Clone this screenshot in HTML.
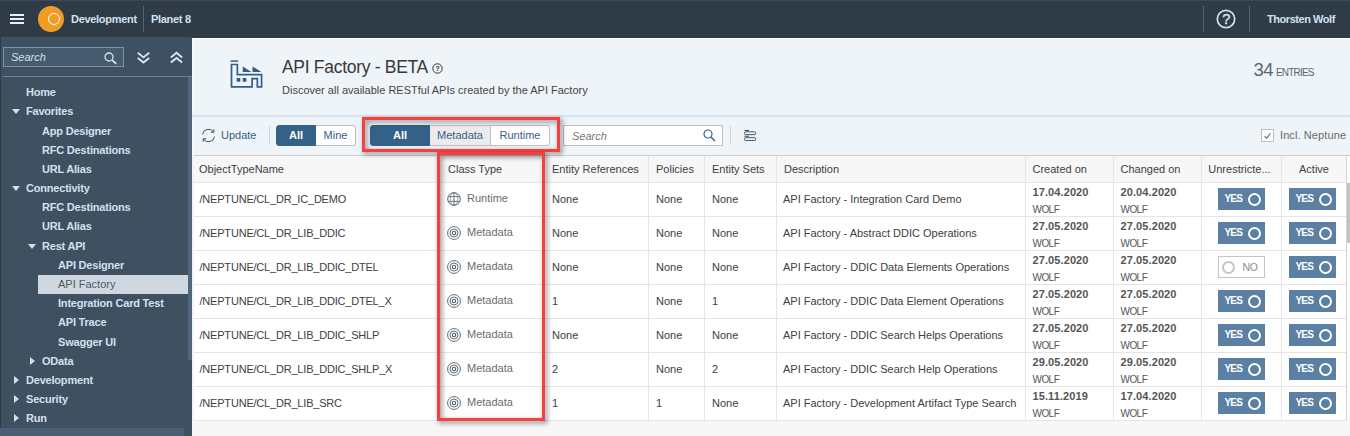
<!DOCTYPE html>
<html lang="en">
<head>
<meta charset="utf-8">
<title>API Factory - BETA</title>
<style>
*{box-sizing:border-box;margin:0;padding:0}
html,body{width:1350px;height:436px;overflow:hidden;background:#eff4f9;font-family:"Liberation Sans",sans-serif;font-size:11px;color:#333}
.abs{position:absolute}
#shell{position:absolute;left:0;top:0;width:1350px;height:37px;background:#2f3c48;color:#d1e0ee}
#shell .t{position:absolute;top:12px;font-weight:bold;font-size:11px;letter-spacing:-0.3px;line-height:14px;white-space:nowrap}
#shell .sep{position:absolute;top:6px;width:1px;height:26px;background:#56646f}
#side{position:absolute;left:0;top:37px;width:192px;height:399px;background:#3f5161;color:#d1e0ee}
#side .it{position:absolute;font-weight:bold;font-size:11px;letter-spacing:-0.2px;line-height:14px;white-space:nowrap}
#side .sel{position:absolute;left:38px;width:150px;height:19px;background:#cfd8e1}
#side .ar{position:absolute;width:0;height:0}
#side .dn{border-left:4.5px solid transparent;border-right:4.5px solid transparent;border-top:5px solid #d1e0ee}
#side .rt{border-top:4px solid transparent;border-bottom:4px solid transparent;border-left:5px solid #d1e0ee}
#main{position:absolute;left:192px;top:37px;width:1158px;height:399px;background:#eff4f9}
.txt{position:absolute;white-space:nowrap;line-height:14px}
.vl{position:absolute;width:1px;background:#e5e5e5}
.hl{position:absolute;height:1px;background:#e5e5e5}
.c{position:absolute;white-space:nowrap;line-height:14px;font-size:11px;color:#404040}
.g{color:#6a6d70}
.d{font-weight:bold;color:#555;letter-spacing:0.1px}
.u{font-size:10px;color:#555;letter-spacing:-0.55px}
.sw{position:absolute;width:47px;height:22px;background:#5b80a3;color:#fff;font-weight:bold;font-size:10px;letter-spacing:-0.8px;line-height:22px;padding-left:6.5px}
.sw i{position:absolute;right:4px;top:4.5px;width:13px;height:13px;border:2px solid #fff;border-radius:50%}
.swn{position:absolute;width:47px;height:22px;background:#fff;border:1px solid #c4c4c4;color:#8c8c8c;font-size:10.5px;letter-spacing:-0.3px;line-height:20px;padding-left:23.5px}
.swn i{position:absolute;left:3px;top:3.5px;width:13px;height:13px;border:2px solid #c4c4c4;border-radius:50%}
.seg{position:absolute;top:125px;height:21px;font-size:11px;line-height:18px;text-align:center;color:#346187;background:#fff;border:1px solid #c0c0c0}
.seg.on{background:#346187;color:#fff;font-weight:bold;border-color:#346187}
.red{position:absolute;border:3px solid #f83f40;filter:drop-shadow(2px 2px 2.5px rgba(0,0,0,.5))}
</style>
</head>
<body>
<div id="shell">
<div class="abs" style="left:0;top:0;width:1350px;height:1px;background:#3b4956"></div>
<svg class="abs" style="left:10px;top:14px" width="15" height="10" viewBox="0 0 15 10"><path d="M0 1h14M0 5h14M0 9h14" stroke="#e6f0f9" stroke-width="2"/></svg>
<div class="abs" style="left:38px;top:6px;width:26px;height:26px;border-radius:50%;background:#f09d28"></div>
<div class="abs" style="left:48px;top:13px;width:12px;height:12px;border-radius:50%;border:1px solid #fff"></div>
<div class="t" style="left:71px">Development</div>
<div class="sep" style="left:143px"></div>
<div class="t" style="left:151px">Planet 8</div>
<div class="sep" style="left:1203px"></div>
<svg class="abs" style="left:1216px;top:9px" width="20" height="20" viewBox="0 0 20 20"><circle cx="10" cy="10" r="8.7" fill="none" stroke="#d1e0ee" stroke-width="1.7"/><text x="10.2" y="15" text-anchor="middle" font-family="Liberation Sans, sans-serif" font-size="14.5" stroke="#d1e0ee" stroke-width="0.4" fill="#d1e0ee">?</text></svg>
<div class="sep" style="left:1249px"></div>
<div class="t" style="left:1267px;letter-spacing:-0.45px">Thorsten Wolf</div>
</div>
<div id="side">
<div class="abs" style="left:0;top:0;width:1px;height:399px;background:#2f3c48"></div>
<div class="abs" style="left:3px;top:10px;width:121px;height:20px;border:1px solid #7f93a6;background:#475b6e"></div>
<div class="txt" style="left:11px;top:13px;font-style:italic;font-size:11px;color:#d1e0ee">Search</div>
<svg class="abs" style="left:104px;top:14.7px" width="13" height="13" viewBox="0 0 13 13"><circle cx="5" cy="5" r="4" fill="none" stroke="#cfe3f5" stroke-width="1.3"/><path d="M8 8l4.3 3.8" stroke="#cfe3f5" stroke-width="1.7"/></svg>
<svg class="abs" style="left:137px;top:14px" width="13" height="13" viewBox="0 0 13 13"><path d="M0.8 1.8l5.7 4.6 5.7-4.6M0.8 7l5.7 4.6 5.7-4.6" fill="none" stroke="#d5e8f9" stroke-width="1.9"/></svg>
<svg class="abs" style="left:169.5px;top:14px" width="13" height="13" viewBox="0 0 13 13"><path d="M0.8 6.4l5.7-4.6 5.7 4.6M0.8 11.6l5.7-4.6 5.7 4.6" fill="none" stroke="#d5e8f9" stroke-width="1.9"/></svg>
<div class="abs" style="left:3px;top:39px;width:189px;height:1px;background:#6d8297"></div>
<div class="abs" style="left:188px;top:40px;width:4px;height:283px;background:#50677e"></div>
<div class="abs" style="left:0;top:391px;width:184px;height:8px;background:#4a5f73"></div>
<div class="it" style="left:26px;top:48px">Home</div>
<div class="ar dn" style="left:12px;top:72px"></div>
<div class="it" style="left:26px;top:67px">Favorites</div>
<div class="it" style="left:42px;top:87px">App Designer</div>
<div class="it" style="left:42px;top:106px">RFC Destinations</div>
<div class="it" style="left:42px;top:125px">URL Alias</div>
<div class="ar dn" style="left:12px;top:149px"></div>
<div class="it" style="left:26px;top:144px">Connectivity</div>
<div class="it" style="left:42px;top:163px">RFC Destinations</div>
<div class="it" style="left:42px;top:182px">URL Alias</div>
<div class="ar dn" style="left:28px;top:207px"></div>
<div class="it" style="left:42px;top:202px">Rest API</div>
<div class="it" style="left:58px;top:221px">API Designer</div>
<div class="sel" style="top:238px"></div>
<div class="it" style="left:58px;top:240px;color:#4d5a66;font-weight:normal;letter-spacing:0">API Factory</div>
<div class="it" style="left:58px;top:259px">Integration Card Test</div>
<div class="it" style="left:58px;top:278px">API Trace</div>
<div class="it" style="left:58px;top:298px">Swagger UI</div>
<div class="ar rt" style="left:30px;top:320px"></div>
<div class="it" style="left:42px;top:317px">OData</div>
<div class="ar rt" style="left:14px;top:339px"></div>
<div class="it" style="left:26px;top:336px">Development</div>
<div class="ar rt" style="left:14px;top:358px"></div>
<div class="it" style="left:26px;top:355px">Security</div>
<div class="ar rt" style="left:14px;top:377px"></div>
<div class="it" style="left:26px;top:374px">Run</div>
</div>
<div id="content" class="abs" style="left:0;top:0;width:1350px;height:436px">
<div class="abs" style="left:191px;top:37px;width:1159px;height:1px;background:#2f3c48"></div>
<div class="abs" style="left:192px;top:38px;width:1158px;height:1px;background:#fff"></div>
<div class="abs" style="left:192px;top:38px;width:1px;height:117px;background:#f5f8fb"></div>
<svg class="abs" style="left:222px;top:52px" width="50" height="44" viewBox="0 0 495 436"><g fill="none" stroke="#30608a" stroke-width="17"><path d="M85 90H160" stroke-width="15"/><path d="M94 124H152V225H392V346H350V263H298V346H94Z"/></g><path d="M205 143V197H292ZM302 143V197H390ZM145 258h36v37h-36zM205 258h36v37h-36z" fill="#30608a"/></svg>
<div class="txt" style="left:282px;top:56px;font-size:17.5px;line-height:22px;letter-spacing:-0.3px;color:#383838">API Factory - BETA</div>
<svg class="abs" style="left:432px;top:63px" width="11" height="11" viewBox="0 0 11 11"><circle cx="5.5" cy="5.5" r="4.7" fill="none" stroke="#333" stroke-width="1"/><text x="5.5" y="8.3" text-anchor="middle" font-family="Liberation Sans, sans-serif" font-weight="bold" font-size="7.5" fill="#333">?</text></svg>
<div class="txt" style="left:282px;top:83px;color:#444">Discover all available RESTful APIs created by the API Factory</div>
<div class="txt" style="left:1253.5px;top:59px;font-size:18.5px;line-height:22px;color:#5c666e;letter-spacing:-0.6px">34</div>
<div class="txt" style="left:1276px;top:66px;font-size:10px;color:#5c666e;letter-spacing:-0.8px">ENTRIES</div>
<div class="abs" style="left:192px;top:115px;width:1158px;height:2px;background:#d6e3f0"></div>
<svg class="abs" style="left:201px;top:128px" width="15" height="15" viewBox="0 0 15 15"><g fill="none" stroke="#3f5161" stroke-width="1"><path d="M1.5 6.5a6 6 0 0 1 11-2.5"/><path d="M13.5 8.5a6 6 0 0 1-11 2.5"/><path d="M12.8 1.2v3h-3M2.2 13.8v-3h3"/></g></svg>
<div class="txt" style="left:221px;top:128px;color:#346187;font-size:11px">Update</div>
<div class="abs" style="left:269px;top:126px;width:1px;height:19px;background:#ccd5dd"></div>
<div class="seg on" style="left:276px;width:40px;border-radius:3px 0 0 3px">All</div>
<div class="seg" style="left:316px;width:40px;border-radius:0 3px 3px 0;border-left:0">Mine</div>
<div class="seg on" style="left:370px;width:60px;border-radius:3px 0 0 3px">All</div>
<div class="seg" style="left:430px;width:61px;border-left:0;background:#ebebeb">Metadata</div>
<div class="seg" style="left:491px;width:59px;border-radius:0 3px 3px 0;border-left:0">Runtime</div>
<div class="abs" style="left:563px;top:125px;width:160px;height:21px;background:#fff;border:1px solid #c0c0c0"></div>
<div class="txt" style="left:572px;top:129px;font-style:italic;color:#767676">Search</div>
<svg class="abs" style="left:703px;top:129px" width="13" height="13" viewBox="0 0 13 13"><circle cx="5" cy="5" r="4" fill="none" stroke="#346187" stroke-width="1.2"/><path d="M8 8l4 4" stroke="#346187" stroke-width="1.5"/></svg>
<div class="abs" style="left:730px;top:126px;width:1px;height:19px;background:#ccd5dd"></div>
<svg class="abs" style="left:744px;top:129px" width="13" height="13" viewBox="0 0 13 13"><g fill="none" stroke="#34495e"><path d="M0.5 1.5h4.5M0.5 7.3h4.5" stroke-width="1.1"/><rect x="0.6" y="2.8" width="11" height="2.8" rx="0.8" stroke-width="0.9"/><rect x="0.6" y="8.7" width="11" height="2.8" rx="0.8" stroke-width="0.9"/></g></svg>
<div class="abs" style="left:1261px;top:129px;width:13px;height:13px;background:#fff;border:1.5px solid #bdbdbd"></div>
<svg class="abs" style="left:1263px;top:131px" width="9" height="9" viewBox="0 0 9 9"><path d="M1.6 5.2l2.2 2 3.6-4.8" fill="none" stroke="#427cac" stroke-width="1.2"/></svg>
<div class="txt" style="left:1280px;top:128px;color:#6a6a6a;letter-spacing:0.1px">Incl. Neptune</div>
<div class="abs" style="left:194px;top:156px;width:1153px;height:27px;background:#f7f7f7"></div>
<div class="abs" style="left:194px;top:183px;width:1153px;height:238px;background:#fff"></div>
<div class="abs" style="left:192px;top:421px;width:1158px;height:15px;background:#f7f7f7"></div>
<div class="hl" style="left:194px;top:155px;width:1156px;background:#cdcdcd"></div>
<div class="hl" style="left:194px;top:182px;width:1152px"></div>
<div class="hl" style="left:194px;top:216px;width:1152px"></div>
<div class="hl" style="left:194px;top:250px;width:1152px"></div>
<div class="hl" style="left:194px;top:284px;width:1152px"></div>
<div class="hl" style="left:194px;top:318px;width:1152px"></div>
<div class="hl" style="left:194px;top:352px;width:1152px"></div>
<div class="hl" style="left:194px;top:386px;width:1152px"></div>
<div class="hl" style="left:194px;top:420px;width:1152px"></div>
<div class="vl" style="left:440px;top:156px;height:265px"></div>
<div class="vl" style="left:544px;top:156px;height:265px"></div>
<div class="vl" style="left:648px;top:156px;height:265px"></div>
<div class="vl" style="left:704px;top:156px;height:265px"></div>
<div class="vl" style="left:776px;top:156px;height:265px"></div>
<div class="vl" style="left:1025px;top:156px;height:265px"></div>
<div class="vl" style="left:1113px;top:156px;height:265px"></div>
<div class="vl" style="left:1201px;top:156px;height:265px"></div>
<div class="vl" style="left:1281px;top:156px;height:265px"></div>
<div class="vl" style="left:1346px;top:156px;height:265px"></div>
<div class="c" style="left:199px;top:162px">ObjectTypeName</div>
<div class="c" style="left:448px;top:162px">Class Type</div>
<div class="c" style="left:552px;top:162px">Entity References</div>
<div class="c" style="left:656px;top:162px">Policies</div>
<div class="c" style="left:712px;top:162px">Entity Sets</div>
<div class="c" style="left:784px;top:162px">Description</div>
<div class="c" style="left:1032.5px;top:162px">Created on</div>
<div class="c" style="left:1120.5px;top:162px">Changed on</div>
<div class="c" style="left:1199px;top:162px;width:81px;text-align:center">Unrestricte...</div>
<div class="c" style="left:1281px;top:162px;width:66px;text-align:center">Active</div>
<div class="c" style="left:199.5px;top:192px;letter-spacing:-0.2px">/NEPTUNE/CL_DR_IC_DEMO</div>
<svg class="abs" style="left:447px;top:192.3px" width="14" height="14" viewBox="0 0 14 14"><g fill="none" stroke="#55636f" stroke-width="0.85"><circle cx="7" cy="7" r="6.3" stroke-width="1"/><ellipse cx="7" cy="7" rx="3.7" ry="6.3" stroke-width="0.7" stroke-opacity="0.8"/><path d="M1.2 4.6h11.6M1.2 9.4h11.6M7 .7v12.6"/></g></svg>
<div class="c g" style="left:467px;top:191px">Runtime</div>
<div class="c" style="left:552px;top:192px">None</div>
<div class="c" style="left:656px;top:192px">None</div>
<div class="c" style="left:712px;top:192px">None</div>
<div class="c" style="left:783px;top:192px">API Factory - Integration Card Demo</div>
<div class="c d" style="left:1032.5px;top:185px">17.04.2020</div>
<div class="c u" style="left:1032.5px;top:203px">WOLF</div>
<div class="c d" style="left:1120.5px;top:185px">20.04.2020</div>
<div class="c u" style="left:1120.5px;top:203px">WOLF</div>
<div class="sw" style="left:1218px;top:188px">YES<i></i></div>
<div class="sw" style="left:1289px;top:188px">YES<i></i></div>
<div class="c" style="left:199.5px;top:226px;letter-spacing:-0.2px">/NEPTUNE/CL_DR_LIB_DDIC</div>
<svg class="abs" style="left:447px;top:226.3px" width="14" height="14" viewBox="0 0 14 14"><g fill="none" stroke="#4f5e6b" stroke-width="1"><circle cx="7" cy="7" r="6.4" stroke-width="0.9"/><circle cx="7" cy="7" r="4" stroke-width="0.9"/><circle cx="7" cy="7" r="1.7" stroke-width="1.1"/></g></svg>
<div class="c g" style="left:467px;top:225px">Metadata</div>
<div class="c" style="left:552px;top:226px">None</div>
<div class="c" style="left:656px;top:226px">None</div>
<div class="c" style="left:712px;top:226px">None</div>
<div class="c" style="left:783px;top:226px">API Factory - Abstract DDIC Operations</div>
<div class="c d" style="left:1032.5px;top:219px">27.05.2020</div>
<div class="c u" style="left:1032.5px;top:237px">WOLF</div>
<div class="c d" style="left:1120.5px;top:219px">27.05.2020</div>
<div class="c u" style="left:1120.5px;top:237px">WOLF</div>
<div class="sw" style="left:1218px;top:222px">YES<i></i></div>
<div class="sw" style="left:1289px;top:222px">YES<i></i></div>
<div class="c" style="left:199.5px;top:260px;letter-spacing:-0.2px">/NEPTUNE/CL_DR_LIB_DDIC_DTEL</div>
<svg class="abs" style="left:447px;top:260.3px" width="14" height="14" viewBox="0 0 14 14"><g fill="none" stroke="#4f5e6b" stroke-width="1"><circle cx="7" cy="7" r="6.4" stroke-width="0.9"/><circle cx="7" cy="7" r="4" stroke-width="0.9"/><circle cx="7" cy="7" r="1.7" stroke-width="1.1"/></g></svg>
<div class="c g" style="left:467px;top:259px">Metadata</div>
<div class="c" style="left:552px;top:260px">None</div>
<div class="c" style="left:656px;top:260px">None</div>
<div class="c" style="left:712px;top:260px">None</div>
<div class="c" style="left:783px;top:260px">API Factory - DDIC Data Elements Operations</div>
<div class="c d" style="left:1032.5px;top:253px">27.05.2020</div>
<div class="c u" style="left:1032.5px;top:271px">WOLF</div>
<div class="c d" style="left:1120.5px;top:253px">27.05.2020</div>
<div class="c u" style="left:1120.5px;top:271px">WOLF</div>
<div class="swn" style="left:1218px;top:256px">NO<i></i></div>
<div class="sw" style="left:1289px;top:256px">YES<i></i></div>
<div class="c" style="left:199.5px;top:294px;letter-spacing:-0.2px">/NEPTUNE/CL_DR_LIB_DDIC_DTEL_X</div>
<svg class="abs" style="left:447px;top:294.3px" width="14" height="14" viewBox="0 0 14 14"><g fill="none" stroke="#4f5e6b" stroke-width="1"><circle cx="7" cy="7" r="6.4" stroke-width="0.9"/><circle cx="7" cy="7" r="4" stroke-width="0.9"/><circle cx="7" cy="7" r="1.7" stroke-width="1.1"/></g></svg>
<div class="c g" style="left:467px;top:293px">Metadata</div>
<div class="c" style="left:552px;top:294px">1</div>
<div class="c" style="left:656px;top:294px">None</div>
<div class="c" style="left:712px;top:294px">1</div>
<div class="c" style="left:783px;top:294px">API Factory - DDIC Data Element Operations</div>
<div class="c d" style="left:1032.5px;top:287px">27.05.2020</div>
<div class="c u" style="left:1032.5px;top:305px">WOLF</div>
<div class="c d" style="left:1120.5px;top:287px">27.05.2020</div>
<div class="c u" style="left:1120.5px;top:305px">WOLF</div>
<div class="sw" style="left:1218px;top:290px">YES<i></i></div>
<div class="sw" style="left:1289px;top:290px">YES<i></i></div>
<div class="c" style="left:199.5px;top:328px;letter-spacing:-0.2px">/NEPTUNE/CL_DR_LIB_DDIC_SHLP</div>
<svg class="abs" style="left:447px;top:328.3px" width="14" height="14" viewBox="0 0 14 14"><g fill="none" stroke="#4f5e6b" stroke-width="1"><circle cx="7" cy="7" r="6.4" stroke-width="0.9"/><circle cx="7" cy="7" r="4" stroke-width="0.9"/><circle cx="7" cy="7" r="1.7" stroke-width="1.1"/></g></svg>
<div class="c g" style="left:467px;top:327px">Metadata</div>
<div class="c" style="left:552px;top:328px">None</div>
<div class="c" style="left:656px;top:328px">None</div>
<div class="c" style="left:712px;top:328px">None</div>
<div class="c" style="left:783px;top:328px">API Factory - DDIC Search Helps Operations</div>
<div class="c d" style="left:1032.5px;top:321px">27.05.2020</div>
<div class="c u" style="left:1032.5px;top:339px">WOLF</div>
<div class="c d" style="left:1120.5px;top:321px">27.05.2020</div>
<div class="c u" style="left:1120.5px;top:339px">WOLF</div>
<div class="sw" style="left:1218px;top:324px">YES<i></i></div>
<div class="sw" style="left:1289px;top:324px">YES<i></i></div>
<div class="c" style="left:199.5px;top:362px;letter-spacing:-0.2px">/NEPTUNE/CL_DR_LIB_DDIC_SHLP_X</div>
<svg class="abs" style="left:447px;top:362.3px" width="14" height="14" viewBox="0 0 14 14"><g fill="none" stroke="#4f5e6b" stroke-width="1"><circle cx="7" cy="7" r="6.4" stroke-width="0.9"/><circle cx="7" cy="7" r="4" stroke-width="0.9"/><circle cx="7" cy="7" r="1.7" stroke-width="1.1"/></g></svg>
<div class="c g" style="left:467px;top:361px">Metadata</div>
<div class="c" style="left:552px;top:362px">2</div>
<div class="c" style="left:656px;top:362px">None</div>
<div class="c" style="left:712px;top:362px">2</div>
<div class="c" style="left:783px;top:362px">API Factory - DDIC Search Help Operations</div>
<div class="c d" style="left:1032.5px;top:355px">29.05.2020</div>
<div class="c u" style="left:1032.5px;top:373px">WOLF</div>
<div class="c d" style="left:1120.5px;top:355px">29.05.2020</div>
<div class="c u" style="left:1120.5px;top:373px">WOLF</div>
<div class="sw" style="left:1218px;top:358px">YES<i></i></div>
<div class="sw" style="left:1289px;top:358px">YES<i></i></div>
<div class="c" style="left:199.5px;top:396px;letter-spacing:-0.2px">/NEPTUNE/CL_DR_LIB_SRC</div>
<svg class="abs" style="left:447px;top:396.3px" width="14" height="14" viewBox="0 0 14 14"><g fill="none" stroke="#4f5e6b" stroke-width="1"><circle cx="7" cy="7" r="6.4" stroke-width="0.9"/><circle cx="7" cy="7" r="4" stroke-width="0.9"/><circle cx="7" cy="7" r="1.7" stroke-width="1.1"/></g></svg>
<div class="c g" style="left:467px;top:395px">Metadata</div>
<div class="c" style="left:552px;top:396px">1</div>
<div class="c" style="left:656px;top:396px">1</div>
<div class="c" style="left:712px;top:396px">None</div>
<div class="c" style="left:783px;top:396px">API Factory - Development Artifact Type Search</div>
<div class="c d" style="left:1032.5px;top:389px">15.11.2019</div>
<div class="c u" style="left:1032.5px;top:407px">WOLF</div>
<div class="c d" style="left:1120.5px;top:389px">17.04.2020</div>
<div class="c u" style="left:1120.5px;top:407px">WOLF</div>
<div class="sw" style="left:1218px;top:392px">YES<i></i></div>
<div class="sw" style="left:1289px;top:392px">YES<i></i></div>
<div class="abs" style="left:1347px;top:156px;width:3px;height:265px;background:#fcfcfc"></div>
<div class="abs" style="left:1346px;top:156px;width:1px;height:265px;background:#d4d4d4"></div>
<div class="abs" style="left:1347px;top:183px;width:3px;height:60px;background:#c2c2c2"></div>
<div class="red" style="left:362px;top:117px;width:198px;height:35px"></div>
<div class="red" style="left:437px;top:152px;width:108px;height:269px"></div>
</div>
</body>
</html>
